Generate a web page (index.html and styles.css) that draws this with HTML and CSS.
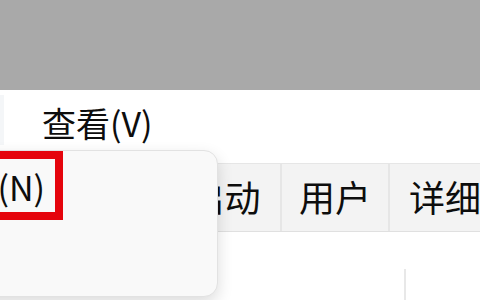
FILE: index.html
```html
<!DOCTYPE html>
<html lang="zh-CN">
<head>
<meta charset="utf-8">
<title>任务管理器</title>
<link rel="stylesheet" href="styles.css">
</head>
<body>
<div class="window">
  <div class="titlebar"></div>
  <nav class="menubar">
    <span class="menu-item is-hover">选项(O)</span>
    <span class="menu-item">查看(V)</span>
  </nav>
  <div class="tabs">
    <span class="tab tab-hidden">应用历史记录</span>
    <span class="tab tab-startup">启动</span>
    <span class="tab tab-users">用户</span>
    <span class="tab tab-details">详细信息</span>
    <span class="tab">服务</span>
  </div>
  <div class="table-head">
    <div class="col col-name"></div>
    <div class="col"></div>
  </div>
  <div class="dropdown">
    <div class="dropdown-item">
      <span class="dropdown-label">运行新任务(N)</span>
      <span class="annotation"></span>
    </div>
  </div>
</div>
</body>
</html>
```
FILE: styles.css
```css
html, body {
  margin: 0;
  padding: 0;
}
body {
  width: 480px;
  height: 300px;
  overflow: hidden;
  background: #ffffff;
  font-family: "Noto Sans CJK SC", "Noto Sans", sans-serif;
  color: #0d0d0d;
}
.window {
  position: relative;
  width: 480px;
  height: 300px;
  overflow: hidden;
}
.titlebar {
  height: 90px;
  background: #a9a9a9;
}
.menubar {
  display: flex;
  align-items: center;
  height: 60px;
  margin-left: -136px;
  font-size: 34px;
  line-height: 1;
}
.menu-item {
  display: flex;
  align-items: center;
  height: 50px;
  padding: 0 0 0 38px;
  white-space: nowrap;
  margin-top: 6px;
}
.menu-item.is-hover {
  width: 140px;
  padding: 0;
  justify-content: flex-end;
  background: #f4f6f8;
  color: transparent;
  overflow: hidden;
  margin-top: 0;
}
.tabs {
  display: flex;
  margin-top: 13px;
  height: 67px;
  border-top: 1px solid #e6e6e6;
  border-bottom: 1px solid #e0e0e0;
  background: #f3f3f3;
  font-size: 36px;
  line-height: 1;
}
.tab {
  flex: 0 0 auto;
  display: flex;
  align-items: center;
  justify-content: center;
  white-space: nowrap;
  overflow: hidden;
  border-right: 2px solid #e6e6e6;
  box-sizing: border-box;
  padding: 0 18px 4px;
}
.tab-hidden {
  width: 169px;
  justify-content: flex-end;
}
.tab-startup {
  width: 113px;
}
.tab-users {
  width: 108px;
}
.tab-details {
  justify-content: flex-start;
  padding-left: 19px;
}
.table-head {
  display: flex;
  margin-top: 37px;
  height: 40px;
}
.col-name {
  width: 404px;
  border-right: 2px solid #e8e8e8;
}
.dropdown {
  position: absolute;
  left: -182px;
  top: 150px;
  width: 398px;
  height: 145px;
  background: #f9f9f9;
  border: 1px solid #e2e2e2;
  border-radius: 14px;
  box-shadow: 0 6px 16px rgba(0, 0, 0, 0.14);
}
.dropdown-item {
  position: relative;
  width: 226px;
  height: 69px;
  display: flex;
  align-items: center;
  justify-content: flex-end;
  font-size: 34px;
  line-height: 1;
}
.dropdown-label {
  white-space: nowrap;
  margin-top: 2px;
}
.annotation {
  position: absolute;
  top: 0;
  bottom: 0;
  left: 40px;
  right: -18px;
  border: 8px solid #e5040c;
  box-sizing: border-box;
}
```
